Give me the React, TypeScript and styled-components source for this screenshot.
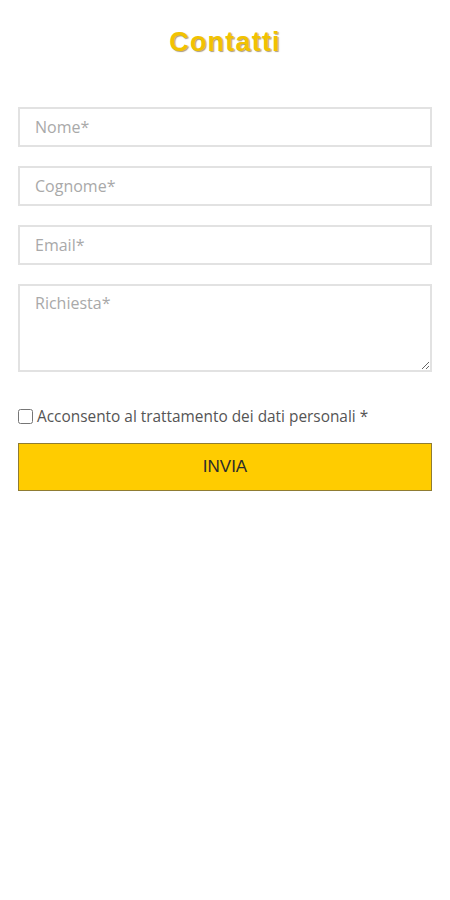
import styled, { createGlobalStyle } from "styled-components";

const GlobalStyle = createGlobalStyle`
    html, body {
        margin: 0;
        padding: 0;
        background: #ffffff;
    }
    * {
        box-sizing: border-box;
    }
`;

const Page = styled.div`
    padding: 0 18px;
    font-family: "Open Sans", "Liberation Sans", sans-serif;
`;

const Title = styled.h1`
    margin: 0;
    padding-top: 27px;
    height: 107px;
    text-align: center;
    font-family: "Liberation Sans", Arial, sans-serif;
    font-size: 27px;
    font-weight: bold;
    letter-spacing: 1.2px;
    color: #f2c200;
    text-shadow: 1px 1px 1px rgba(90, 60, 0, 0.5);
`;

const Form = styled.form`
    display: flex;
    flex-direction: column;
    gap: 19px;
`;

const Field = styled.input`
    width: 100%;
    height: 40px;
    border: 2px solid #e2e2e2;
    padding: 0 15px;
    font-family: "Open Sans", sans-serif;
    font-size: 16px;
    color: #444;
    outline: none;
    &::placeholder {
        color: #a9a9a9;
    }
`;

const Area = styled.textarea`
    width: 100%;
    height: 88px;
    border: 2px solid #e2e2e2;
    padding: 6px 15px;
    font-family: "Open Sans", sans-serif;
    font-size: 16px;
    color: #444;
    resize: vertical;
    outline: none;
    display: block;
    &::placeholder {
        color: #a9a9a9;
    }
`;

const Consent = styled.label`
    display: flex;
    align-items: center;
    gap: 4px;
    margin-top: 15px;
    font-size: 15.4px;
    color: #555;
`;

const Check = styled.input`
    margin: 0;
    width: 15px;
    height: 15px;
`;

const Submit = styled.button`
    margin-top: -3px;
    height: 48px;
    width: 100%;
    background: #ffcc00;
    border: 1px solid #8f7c33;
    font-family: "Liberation Sans", Arial, sans-serif;
    font-size: 17px;
    color: #2b2b2b;
    cursor: pointer;
`;

function App() {
    return (
        <Page>
            <GlobalStyle />
            <Title>Contatti</Title>
            <Form onSubmit={(e) => e.preventDefault()}>
                <Field placeholder="Nome*" />
                <Field placeholder="Cognome*" />
                <Field placeholder="Email*" />
                <Area placeholder="Richiesta*" />
                <Consent>
                    <Check type="checkbox" />
                    Acconsento al trattamento dei dati personali *
                </Consent>
                <Submit type="submit">INVIA</Submit>
            </Form>
        </Page>
    );
}

export default App;
